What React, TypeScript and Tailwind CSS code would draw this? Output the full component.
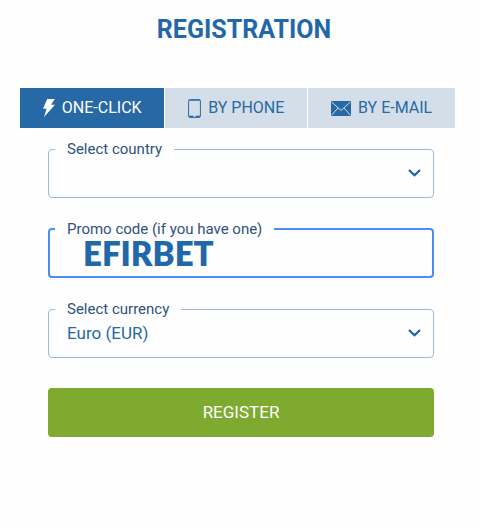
import React, { useState } from "react";

type TabId = "click" | "phone" | "email";

const BoltIcon = () => (
  <svg width="12" height="18" viewBox="1 0 12 18" fill="currentColor" aria-hidden="true">
    <path d="M5.2 0H12.8L9 5.8H13L2 18L4.6 9.8H1L5.2 0Z" />
  </svg>
);

const PhoneIcon = () => (
  <svg width="13" height="19" viewBox="0 0 13 19" fill="none" stroke="currentColor" aria-hidden="true">
    <rect x="0.6" y="0.6" width="11.8" height="17.8" rx="1.2" />
    <path d="M1 1.4H12" strokeWidth="0.8" />
    <path d="M1 17.4H5.4M7.6 17.4H12" strokeWidth="1.4" />
  </svg>
);

const MailIcon = () => (
  <svg width="20" height="15" viewBox="0 0 20 15" aria-hidden="true">
    <rect width="20" height="15" rx="1" fill="currentColor" />
    <path d="M0.8 1.2L10 9.4L19.2 1.2M0.8 14L7 7M19.2 14L13 7" fill="none" stroke="#d4dee8" strokeWidth="1" />
  </svg>
);

const ChevronIcon = () => (
  <svg
    className="pointer-events-none absolute right-3 top-[10px] text-[#1c62a4]"
    width="13"
    height="8"
    viewBox="0 0 13 8"
    fill="none"
    stroke="currentColor"
    strokeWidth="2.2"
    aria-hidden="true"
  >
    <path d="M1 1L6.5 6.2L12 1" />
  </svg>
);

const tabs: { id: TabId; label: string; icon: React.ReactNode }[] = [
  { id: "click", label: "ONE-CLICK", icon: <BoltIcon /> },
  { id: "phone", label: "BY PHONE", icon: <PhoneIcon /> },
  { id: "email", label: "BY E-MAIL", icon: <MailIcon /> },
];

interface SelectFieldProps {
  id: string;
  label: string;
  options: string[];
  value: string;
  onChange: (value: string) => void;
}

const SelectField = ({ id, label, options, value, onChange }: SelectFieldProps) => (
  <fieldset className="min-w-0 rounded border border-[#9dbad6] pl-[6px]">
    <legend className="px-3 text-[15px] leading-5 text-[#2f527c]">
      <label htmlFor={id}>{label}</label>
    </legend>
    <div className="relative h-[38px]">
      <select
        id={id}
        value={value}
        onChange={(e) => onChange(e.target.value)}
        className="h-full w-full appearance-none bg-transparent pb-2 pl-3 pr-10 text-[17px] text-[#2769a5] outline-none"
      >
        {options.map((option) => (
          <option key={option} value={option}>{option}</option>
        ))}
      </select>
      <ChevronIcon />
    </div>
  </fieldset>
);

const App = () => {
  const [activeTab, setActiveTab] = useState<TabId>("click");
  const [country, setCountry] = useState("");
  const [promo, setPromo] = useState("EFIRBET");
  const [currency, setCurrency] = useState("Euro (EUR)");

  return (
    <main className="min-h-screen bg-[#fefefe] font-['Roboto',sans-serif]">
      <h1 className="pl-2 pt-[14px] text-center text-[25px] font-bold leading-8 text-[#2268a8]">REGISTRATION</h1>

      {/* Registration method */}
      <div role="tablist" className="ml-5 mr-[25px] mt-[42px] flex gap-px">
        {tabs.map((tab) => (
          <button
            key={tab.id}
            type="button"
            role="tab"
            aria-selected={activeTab === tab.id}
            onClick={() => setActiveTab(tab.id)}
            className={`flex h-10 flex-auto items-center justify-center gap-[7px] whitespace-nowrap text-base ${
              activeTab === tab.id ? "bg-[#2769a5] text-white" : "bg-[#d4dee8] text-[#2769a5]"
            }`}
          >
            {tab.icon}
            {tab.label}
          </button>
        ))}
      </div>

      <form
        className="ml-12 mr-[46px] mt-[11px] flex flex-col gap-[21px]"
        onSubmit={(e) => e.preventDefault()}
      >
        <SelectField id="country" label="Select country" options={[""]} value={country} onChange={setCountry} />

        <fieldset className="min-w-0 rounded border-2 border-[#4b8df8] pl-[5px]">
          <legend className="px-3 text-[15px] leading-5 text-[#2f527c]">
            <label htmlFor="promo">Promo code (if you have one)</label>
          </legend>
          <input
            id="promo"
            type="text"
            value={promo}
            onChange={(e) => setPromo(e.target.value)}
            className="block h-[37px] w-full bg-transparent pb-[10px] pl-7 pr-3 font-['Lato',sans-serif] text-[33px] font-extrabold leading-8 text-[#2268a8] outline-none"
          />
        </fieldset>

        <SelectField
          id="currency"
          label="Select currency"
          options={["Euro (EUR)"]}
          value={currency}
          onChange={setCurrency}
        />

        <button type="submit" className="mt-[9px] h-[49px] rounded bg-[#7eaa2f] text-[17px] text-white">
          REGISTER
        </button>
      </form>
    </main>
  );
};

export default App;
